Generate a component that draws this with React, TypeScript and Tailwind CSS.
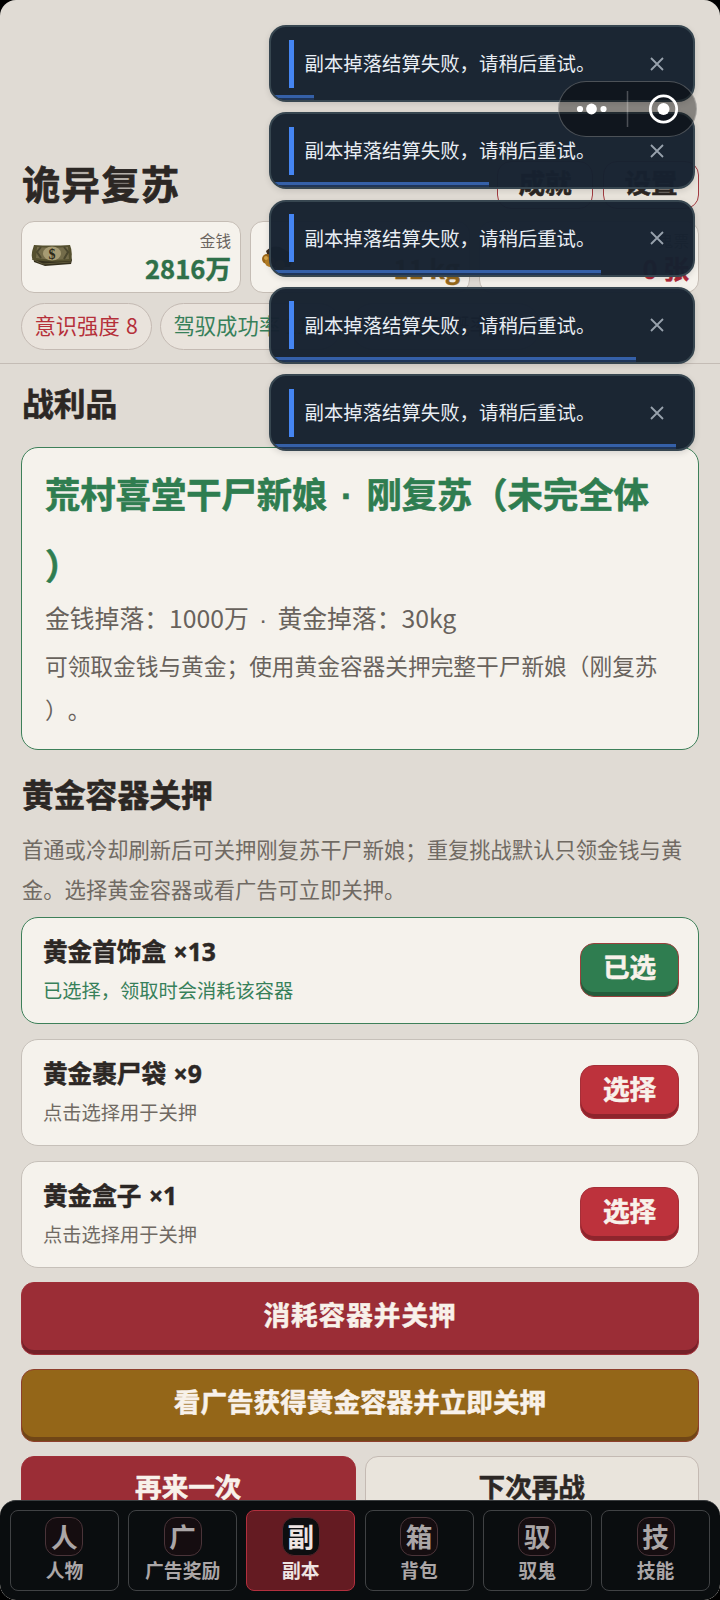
import clsx from "clsx"
import type { ReactNode } from "react"

const toasts = [
  { id: 1, progress: 43 },
  { id: 2, progress: 218 },
  { id: 3, progress: 330 },
  { id: 4, progress: 365 },
  { id: 5, progress: 405 },
]

const containers = [
  { name: "黄金首饰盒", count: 13, selected: true },
  { name: "黄金裹尸袋", count: 9, selected: false },
  { name: "黄金盒子", count: 1, selected: false },
]

const tabs = [
  { glyph: "人", label: "人物" },
  { glyph: "广", label: "广告奖励" },
  { glyph: "副", label: "副本", active: true },
  { glyph: "箱", label: "背包" },
  { glyph: "驭", label: "驭鬼" },
  { glyph: "技", label: "技能" },
]

function CashIcon() {
  return (
    <svg width="42" height="26" viewBox="0 0 42 26">
      <path d="M2 9 L3 19 L14 23 L40 21 L41 17 L38 6Z" fill="#332e1c" />
      <path d="M1 16 L12 21 L40 19" stroke="#5f593b" fill="none" />
      <path d="M3 2 Q20 3 39 2 Q42 9 40 18 Q22 20 2 17 Q-1 13 3 2Z" fill="#55502f" />
      <path d="M6 4 Q21 5 37 4 L38 16 Q22 18 5 15Z" fill="#746c4a" />
      <path d="M10 4 L6 9 L10 15 M33 4 L37 9 L33 16" stroke="#4b472e" strokeWidth="2" fill="none" />
      <ellipse cx="21" cy="10.5" rx="9" ry="7" fill="#a69b73" />
      <text
        x="21"
        y="15.5"
        textAnchor="middle"
        fontSize="14"
        fontWeight="700"
        fontFamily="Liberation Serif, serif"
        fill="#2b2717"
      >
        $
      </text>
    </svg>
  )
}

function GoldIcon() {
  return (
    <svg width="42" height="28" viewBox="0 0 42 28">
      <path d="M6 8 Q12 2 20 4 L34 12 L30 24 L12 24Z" fill="#3a2c22" />
      <circle cx="7" cy="16" r="5" fill="#9a661a" />
      <circle cx="10" cy="19" r="5" fill="#b57d24" />
      <circle cx="6" cy="15" r="2" fill="#d8a748" />
      <circle cx="20" cy="22" r="5" fill="#b98022" />
    </svg>
  )
}

function StatCard({
  icon,
  label,
  value,
  color,
}: {
  icon?: ReactNode
  label: string
  value: string
  color: string
}) {
  return (
    <div className="flex items-start justify-between rounded-[13px] border border-[#c5bdb5] bg-[#f5f2ec] pl-[9px] pr-[9px]">
      <div className="mt-[21px]">{icon}</div>
      <div className="flex flex-col items-end">
        <span className="mt-[6px] text-[15.6px] leading-6 text-[#6a645e]">{label}</span>
        <span
          className={clsx(
            "text-[25.6px] font-bold leading-8 [-webkit-text-stroke:0.4px]",
            color,
          )}
        >
          {value}
        </span>
      </div>
    </div>
  )
}

function Pill({ className, children }: { className: string; children: ReactNode }) {
  return (
    <span
      className={clsx(
        "h-[47px] whitespace-nowrap rounded-full border border-[#c4bab3] bg-[#e9e3dc] px-[12.5px] text-[21.3px] leading-[42px]",
        className,
      )}
    >
      {children}
    </span>
  )
}

function HeaderButton({ children }: { children: ReactNode }) {
  return (
    <button className="h-12 w-24 rounded-[14px] border border-[#a23a40] bg-[#e9e4dc] pb-[8px] text-[26.6px] font-bold leading-[37px] text-[#2c2724] [-webkit-text-stroke:0.5px]">
      {children}
    </button>
  )
}

function BigButton({ className, children }: { className: string; children: ReactNode }) {
  return (
    <button
      className={clsx(
        "block h-[73px] w-full rounded-[13px] border text-[26.6px] font-bold [-webkit-text-stroke:0.5px]",
        className,
      )}
    >
      {children}
    </button>
  )
}

// the CJK middle dot is a full em wide, so take it from a latin face
function Dot({ className }: { className: string }) {
  return (
    <span
      className={clsx(
        "inline-flex justify-center font-['Liberation_Sans',sans-serif] leading-none",
        className,
      )}
    >
      ·
    </span>
  )
}

function Toast({ progress }: { progress: number }) {
  return (
    <div className="relative flex h-[77px] items-center overflow-hidden rounded-[17px] border-2 border-[#374650] bg-[#162230]/98 pl-[18px] shadow-[0_2px_6px_rgba(0,0,0,0.12)]">
      <span className="h-12 w-[5px] bg-[#4585f2]" />
      <span className="ml-[10.5px] flex-1 whitespace-nowrap pb-0.5 text-[19.4px] text-[#e8edf3]">
        副本掉落结算失败，请稍后重试。
      </span>
      <svg className="mr-[29.5px]" width="14" height="14" viewBox="0 0 14 14">
        <path d="M1 1 L13 13 M13 1 L1 13" stroke="#98a2ad" strokeWidth="1.8" />
      </svg>
      <span
        className="absolute bottom-0 left-0 h-[5px] border-t-3 border-[#3560a8] bg-[#1f3558]"
        style={{ width: progress }}
      />
    </div>
  )
}

function Capsule() {
  return (
    <div className="absolute left-[558px] top-[81px] h-14 w-[139px] rounded-full border border-white/25 bg-black/40">
      <svg width="137" height="54" viewBox="0 0 137 54" fill="#fff">
        <circle cx="21" cy="27" r="3.1" />
        <circle cx="32.5" cy="27" r="5.4" />
        <circle cx="44.5" cy="27" r="3.1" />
        <path d="M68.5 9 V45" stroke="#fff" strokeOpacity="0.25" strokeWidth="1.5" />
        <circle cx="104.5" cy="27" r="13.2" fill="none" stroke="#fff" strokeWidth="2.8" />
        <circle cx="104.5" cy="27" r="6" />
      </svg>
    </div>
  )
}

export default function App() {
  return (
    <div className="h-[1600px] w-[720px] bg-black font-['Noto_Sans_CJK_SC',sans-serif]">
      <div className="relative flex h-[1600px] flex-col overflow-hidden rounded-2xl bg-[#e0dbd4] text-[#2c2724]">
        <header className="h-[364px] shrink-0 border-b border-[#c4bcb5] px-[21px] pt-[161px]">
          <div className="flex h-12 items-start justify-between">
            <h1 className="pl-px text-[38.4px] font-bold leading-[42px] tracking-[1.2px] [-webkit-text-stroke:0.7px]">
              诡异复苏
            </h1>
            <div className="flex gap-2.5">
              <HeaderButton>成就</HeaderButton>
              <HeaderButton>设置</HeaderButton>
            </div>
          </div>
          <div className="mt-3 grid h-[72px] grid-cols-3 gap-[9px]">
            <StatCard icon={<CashIcon />} label="金钱" value="2816万" color="text-[#2f7049]" />
            <StatCard icon={<GoldIcon />} label="黄金" value="11 kg" color="text-[#96691c]" />
            <StatCard label="鬼票" value="0 张" color="text-[#b02838]" />
          </div>
          <div className="mt-2.5 flex gap-2">
            <Pill className="w-[131px] [word-spacing:1.5px] text-[#b5303a]">意识强度 8</Pill>
            <Pill className="text-[#37805a]">驾驭成功率 11%</Pill>
            <Pill className="text-[#2c2724]">厉鬼复苏概率 0%</Pill>
          </div>
        </header>

        <main className="min-h-0 flex-1 overflow-hidden px-[21px] pt-[13px]">
          <h2 className="pl-px text-[31.8px] font-bold leading-[50px] [-webkit-text-stroke:0.6px]">
            战利品
          </h2>
          <section className="mt-5 h-[303px] rounded-[17px] border border-[#3d8059] bg-[#f5f2ec] px-[23px] pt-[9px] text-[#68625c]">
            <h3 className="whitespace-nowrap text-[35.3px] font-bold leading-[71px] text-[#2f7d50] [-webkit-text-stroke:0.6px] [text-spacing-trim:space-all]">
              荒村喜堂干尸新娘 <Dot className="w-[23px]" /> 刚复苏（未完全体
              <br />）
            </h3>
            <p className="text-[24.8px] leading-9">
              金钱掉落：1000万 <Dot className="w-[17.5px]" /> 黄金掉落：30kg
            </p>
            <p className="mt-[9px] whitespace-nowrap text-[22.7px] leading-[43.5px] [text-spacing-trim:space-all]">
              可领取金钱与黄金；使用黄金容器关押完整干尸新娘（刚复苏
              <br />）。
            </p>
          </section>

          <h2 className="mt-[18px] pl-px text-[31.8px] font-bold leading-[50px] [-webkit-text-stroke:0.6px]">
            黄金容器关押
          </h2>
          <p className="mt-[11px] whitespace-nowrap pl-px text-[21.3px] leading-[40.3px] text-[#706a63]">
            首通或冷却刷新后可关押刚复苏干尸新娘；重复挑战默认只领金钱与黄
            <br />
            金。选择黄金容器或看广告可立即关押。
          </p>

          <ul className="mt-[7.4px] flex flex-col gap-[15px]">
            {containers.map((item) => (
              <li
                key={item.name}
                className={clsx(
                  "flex h-[107px] items-center justify-between rounded-[17px] border bg-[#f5f2ec] pl-[21px] pr-[19px]",
                  item.selected ? "border-[#3d8059]" : "border-[#c6c0b9]",
                )}
              >
                <div>
                  <h3 className="text-[24.6px] font-bold leading-[38px] [-webkit-text-stroke:0.5px]">
                    {item.name}{" "}
                    <span className="ml-0.5 font-['Noto_Sans',sans-serif]">×{item.count}</span>
                  </h3>
                  <p
                    className={clsx(
                      "text-[19.25px] leading-[38px]",
                      item.selected ? "text-[#37805a]" : "text-[#706a63]",
                    )}
                  >
                    {item.selected ? "已选择，领取时会消耗该容器" : "点击选择用于关押"}
                  </p>
                </div>
                <button
                  className={clsx(
                    "h-[54px] w-[99px] rounded-[14px] border pb-[8px] text-[26.6px] font-bold leading-[44px] text-[#f8f1ea] [-webkit-text-stroke:0.5px]",
                    item.selected
                      ? "border-[#99403c] bg-[#2f7d50] shadow-[inset_0_-4px_0_#245c3b]"
                      : "border-[#a52f38] bg-[#bd323c] shadow-[inset_0_-4px_0_#8e252d]",
                  )}
                >
                  {item.selected ? "已选" : "选择"}
                </button>
              </li>
            ))}
          </ul>

          <div className="mt-3.5 flex flex-col gap-[14.2px]">
            <BigButton className="border-[#9f2f38] bg-[#9b2d36] pb-[9px] tracking-[1px] text-[#f8f1ea] shadow-[inset_0_-4px_0_#742129]">
              消耗容器并关押
            </BigButton>
            <BigButton className="border-[#8d3f2c] bg-[#946618] pb-[9px] text-[#f8f1ea] shadow-[inset_0_-4px_0_#704616]">
              看广告获得黄金容器并立即关押
            </BigButton>
            <div className="grid grid-cols-2 gap-[9px]">
              <BigButton className="border-[#9f2f38] bg-[#9b2d36] pb-[13px] text-[#f8f1ea]">
                再来一次
              </BigButton>
              <BigButton className="border-[#c4bab3] bg-[#e9e4dc] pb-[13px]">下次再战</BigButton>
            </div>
          </div>
        </main>

        <nav className="grid h-[100px] shrink-0 grid-cols-6 gap-[9.4px] rounded-2xl border-t border-[#3a3d3f] bg-[#0a0d0f] px-2.5 pb-[9px] pt-[9px]">
          {tabs.map((tab) => (
            <button
              key={tab.label}
              className={clsx(
                "flex flex-col items-center rounded-lg border pt-1.5",
                tab.active
                  ? "border-[#b2303e] bg-[#641b22] text-[#eee4e2]"
                  : "border-[#404244] text-[#aba6a7]",
              )}
            >
              <span
                className={clsx(
                  "h-[39px] w-[38px] rounded-xl border text-[26.6px] font-bold leading-[35px]",
                  tab.active ? "border-[#54232a] bg-[#0d0e10]" : "border-[#4a3439] bg-[#150d10]",
                )}
              >
                {tab.glyph}
              </span>
              <span className="text-[18.8px] font-bold leading-[28px]">{tab.label}</span>
            </button>
          ))}
        </nav>

        <div className="absolute left-[269px] top-[25px] flex w-[426px] flex-col gap-[10.3px]">
          {toasts.map((toast) => (
            <Toast key={toast.id} progress={toast.progress} />
          ))}
        </div>
        <Capsule />
      </div>
    </div>
  )
}
